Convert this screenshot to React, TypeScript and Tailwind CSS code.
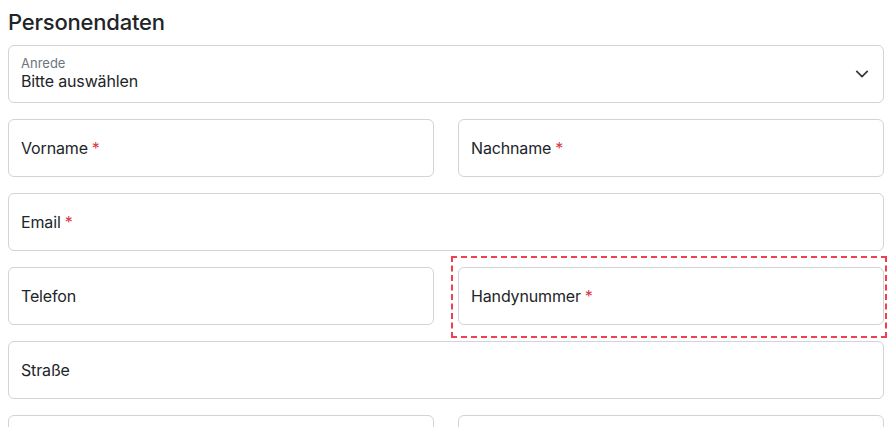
import React from "react";

const Req = () => <span className="text-[#dc3545] ml-1">*</span>;

function Field({ label, required }: { label?: string; required?: boolean }) {
  return (
    <div className="h-[58px] border border-[#ced4da] rounded-[6px] bg-white flex items-center px-[12px]">
      {label && (
        <span className="text-[16px] text-[#212529] tracking-[-0.15px]">
          {label}
          {required && <Req />}
        </span>
      )}
    </div>
  );
}

export default function App() {
  return (
    <div
      className="w-[891px] h-[427px] overflow-hidden bg-white pl-[8px] pr-[7px]"
      style={{ fontFamily: "Inter, 'Noto Sans', sans-serif" }}
    >
      <h2 className="text-[22px] font-medium text-[#212529] leading-[26px] pt-[9px] pb-[10px] tracking-[-0.2px]">
        Personendaten
      </h2>
      <div className="flex flex-col gap-[16px]">
        <div className="h-[58px] border border-[#ced4da] rounded-[6px] bg-white flex items-center justify-between pl-[12px] pr-[14px]">
          <div className="flex flex-col -mt-[2px]">
            <span className="text-[13px] leading-[16px] text-[#6c757d]">Anrede</span>
            <span className="text-[16px] leading-[20px] text-[#212529] tracking-[-0.15px]">Bitte auswählen</span>
          </div>
          <svg width="14" height="14" viewBox="0 0 16 16" fill="none" stroke="#343a40" strokeWidth="2" strokeLinecap="round" strokeLinejoin="round">
            <path d="M2 5l6 6 6-6" />
          </svg>
        </div>
        <div className="grid grid-cols-2 gap-x-[24px]">
          <Field label="Vorname" required />
          <Field label="Nachname" required />
        </div>
        <Field label="Email" required />
        <div className="grid grid-cols-2 gap-x-[24px]">
          <Field label="Telefon" />
          <div className="relative">
            <Field label="Handynummer" required />
            <div className="absolute left-[-7px] top-[-11px] right-[-3px] bottom-[-13px] border-2 border-dashed border-[#ef4050] pointer-events-none" />
          </div>
        </div>
        <Field label="Straße" />
        <div className="grid grid-cols-2 gap-x-[24px]">
          <Field />
          <Field />
        </div>
      </div>
    </div>
  );
}
